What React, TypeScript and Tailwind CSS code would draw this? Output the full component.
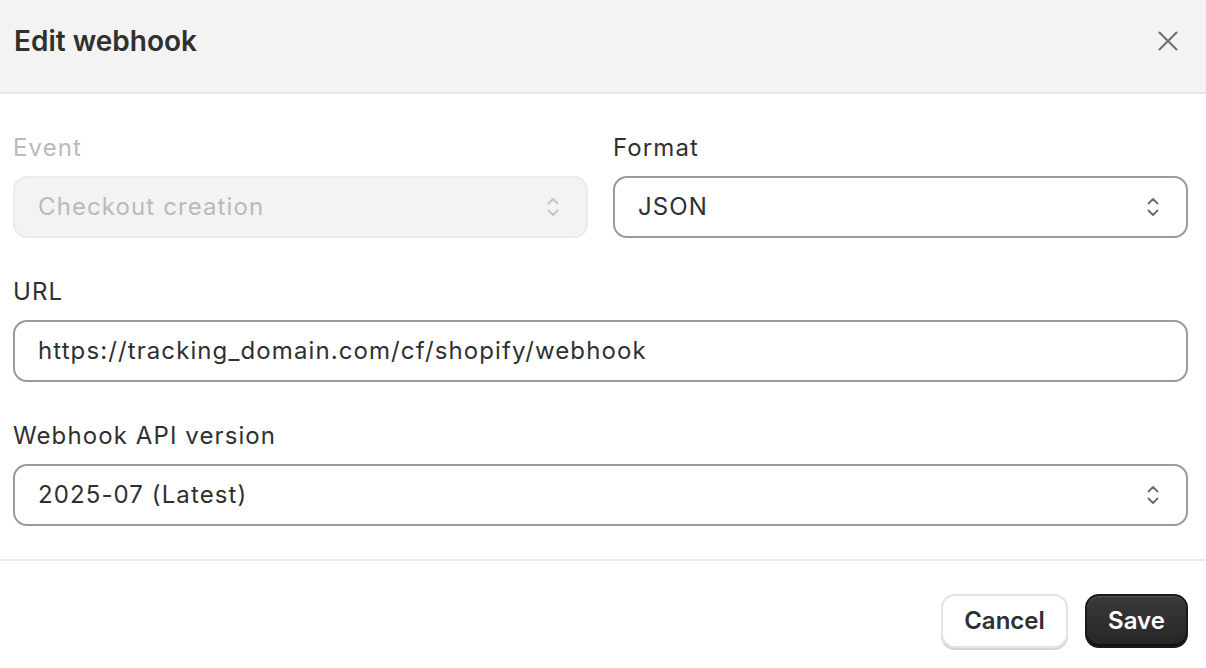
import React from "react";

const font = { fontFamily: "Inter, 'Noto Sans', sans-serif" };

function Chevrons({ color }: { color: string }) {
  return (
    <svg width="14" height="24" viewBox="0 0 14 24" fill="none" stroke={color} strokeWidth="1.8" strokeLinecap="round" strokeLinejoin="round">
      <path d="M2.5 8.5 L7 4 L11.5 8.5" />
      <path d="M2.5 15.5 L7 20 L11.5 15.5" />
    </svg>
  );
}

function Select({ value, disabled }: { value: string; disabled?: boolean }) {
  return (
    <div
      className={
        "h-[62px] rounded-[14px] flex items-center justify-between pl-[23px] pr-[26px] text-[24px] tracking-[1.1px] " +
        (disabled
          ? "bg-[#f3f3f3] border-2 border-[#ebebeb] text-[#bababa]"
          : "bg-white border-2 border-[#9a9a9a] text-[#303030]")
      }
    >
      <span>{value}</span>
      <Chevrons color={disabled ? "#c4c4c4" : "#6b6b6b"} />
    </div>
  );
}

function Label({ children, disabled }: { children: React.ReactNode; disabled?: boolean }) {
  return (
    <div className={"h-[30px] leading-[30px] text-[24px] tracking-[1.1px] mb-[13px] " + (disabled ? "text-[#bababa]" : "text-[#303030]")}>
      {children}
    </div>
  );
}

export default function App() {
  return (
    <div className="w-[1206px] h-[668px] bg-white overflow-hidden flex flex-col" style={font}>
      <div className="h-[94px] shrink-0 bg-[#f3f3f3] border-b-2 border-[#e6e6e6] flex items-center justify-between pl-[14px] pr-[28px] pb-[10px]">
        <div className="text-[28px] font-semibold text-[#303030]">Edit webhook</div>
        <svg width="20" height="20" viewBox="0 0 20 20" fill="none" stroke="#6b6b6b" strokeWidth="2" strokeLinecap="round">
          <path d="M1.5 1.5 L18.5 18.5" />
          <path d="M18.5 1.5 L1.5 18.5" />
        </svg>
      </div>
      <div className="pl-[13px] pr-[18px] pt-[39px] pb-[33px] flex flex-col gap-[39px] border-b-2 border-[#ebebeb]">
        <div className="grid grid-cols-2 gap-[25px]">
          <div>
            <Label disabled>Event</Label>
            <Select value="Checkout creation" disabled />
          </div>
          <div>
            <Label>Format</Label>
            <Select value="JSON" />
          </div>
        </div>
        <div>
          <Label>URL</Label>
          <div className="h-[62px] rounded-[14px] flex items-center pl-[23px] bg-white border-2 border-[#9a9a9a] text-[24px] tracking-[1.1px] text-[#303030]">
            https://tracking_domain.com/cf/shopify/webhook
          </div>
        </div>
        <div>
          <Label>Webhook API version</Label>
          <Select value="2025-07 (Latest)" />
        </div>
      </div>
      <div className="flex justify-end gap-[17px] pt-[33px] pr-[18px]">
        <button className="h-[54px] w-[127px] rounded-[14px] bg-white border-2 border-[#e3e3e3] shadow-[0_2px_0_#d4d4d4] text-[24px] font-semibold text-[#303030]">
          Cancel
        </button>
        <button className="h-[54px] w-[103px] rounded-[14px] bg-gradient-to-b from-[#3a3a3a] to-[#262626] border-2 border-[#1a1a1a] shadow-[inset_0_-2px_0_#111,inset_0_1px_0_#555] text-[24px] font-semibold text-white">
          Save
        </button>
      </div>
    </div>
  );
}
